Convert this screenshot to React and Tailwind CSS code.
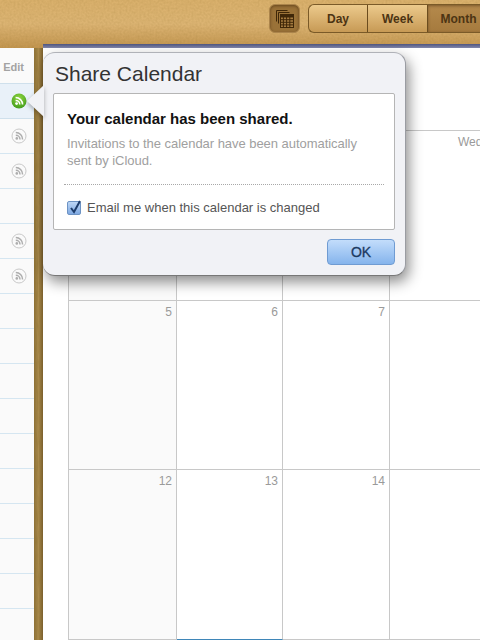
function WoodGrain({ id, freq, opacity }) {
  return (
    <svg className="absolute inset-0 w-full h-full pointer-events-none" style={{ opacity }}>
      <filter id={id}>
        <feTurbulence type="fractalNoise" baseFrequency={freq} numOctaves="3" seed="4" />
        <feColorMatrix values="0 0 0 0 0.25  0 0 0 0 0.15  0 0 0 0 0.02  0 0 0 1.4 -0.45" />
      </filter>
      <rect width="100%" height="100%" filter={`url(#${id})`} />
    </svg>
  )
}

function FeedIcon({ active }) {
  if (active) {
    return (
      <svg width="16" height="16" viewBox="0 0 16 16">
        <defs>
          <radialGradient id="feedGreen" cx="50%" cy="30%" r="75%">
            <stop offset="0%" stopColor="#8fd63f" />
            <stop offset="100%" stopColor="#3f9a1c" />
          </radialGradient>
        </defs>
        <circle cx="8" cy="8" r="7.5" fill="url(#feedGreen)" />
        <circle cx="5.6" cy="10.6" r="1.4" fill="#fff" />
        <path d="M4.6 7.4a4.2 4.2 0 0 1 4.2 4.2M4.6 4.6a7 7 0 0 1 7 7" fill="none" stroke="#fff" strokeWidth="1.5" />
      </svg>
    )
  }
  return (
    <svg width="16" height="16" viewBox="0 0 16 16">
      <circle cx="8" cy="8" r="7" fill="#fafafa" stroke="#c9c9c9" strokeWidth="1" />
      <circle cx="5.8" cy="10.4" r="1.3" fill="#adadad" />
      <path d="M4.8 7.2a4.2 4.2 0 0 1 4.2 4.2M4.8 4.6a6.8 6.8 0 0 1 6.8 6.8" fill="none" stroke="#adadad" strokeWidth="1.5" />
    </svg>
  )
}

function CalIcon() {
  return (
    <svg width="18" height="18" viewBox="0 0 18 18" fill="none" stroke="#3f2708" strokeWidth="1">
      <path d="M0.5 11.5V0.5h11" />
      <path d="M2.5 13.5V2.5h11" />
      <rect x="4.5" y="4.5" width="13" height="13" fill="#a67c40" />
      <path d="M4.5 9.7h13M4.5 12.3h13M4.5 14.9h13M7.4 7v10.5M10.6 7v10.5M13.8 7v10.5" />
      <rect x="4.5" y="4.5" width="13" height="2.5" fill="#3f2708" />
    </svg>
  )
}

const sideRows = [true, true, false, true, true, false, false, false, false, false, false, false, false, false, false]

function Sidebar() {
  return (
    <div className="w-[34px] shrink-0 bg-[#fafafa]">
      <div className="h-[36px] flex items-center justify-end pr-[10px] pt-[4px] border-b border-[#cfe0ec] text-[11px] font-bold text-[#a3a3a3]">
        Edit
      </div>
      <div className="h-[35px] flex items-center justify-end pr-[7px] border-b border-[#cfe0ec] bg-[#e9f1f9]">
        <FeedIcon active />
      </div>
      {sideRows.map((on, i) => (
        <div key={i} className="h-[35px] flex items-center justify-end pr-[7px] border-b border-[#d5e6f1]">
          {on && <FeedIcon />}
        </div>
      ))}
    </div>
  )
}

function DayCell({ day, className }) {
  return (
    <div className={"border-r border-b border-[#c8c8c8] pt-[2px] pr-[4px] text-right text-[12px] text-[#9a9a9a] " + className}>
      {day}
    </div>
  )
}

function Calendar() {
  return (
    <div className="flex-1 min-w-0 bg-white pl-[25px] overflow-hidden">
      <div className="h-[83px] border-b border-[#c8c8c8] w-[500px]" />
      <div className="grid grid-cols-[108px_106px_107px_110px] grid-rows-[170px_169px_170px] w-[432px] border-l border-[#c8c8c8]">
        <DayCell className="bg-[#fafafa]" />
        <DayCell />
        <DayCell />
        <DayCell day="Wed" className="border-r-0 !text-left pl-[68px]" />
        <DayCell day="5" className="bg-[#fafafa]" />
        <DayCell day="6" />
        <DayCell day="7" />
        <DayCell className="border-r-0" />
        <DayCell day="12" className="bg-[#fafafa]" />
        <DayCell day="13" className="border-b-[#3f86b8]" />
        <DayCell day="14" />
        <DayCell className="border-r-0" />
      </div>
    </div>
  )
}

function SharePopover() {
  return (
    <div className="absolute left-[43px] top-[52px] w-[363px] h-[224px] rounded-[12px] bg-[#f1f2f6] border-t border-r border-b border-t-[#b0b2b8] border-r-[#9a9ca2] border-b-[#777] shadow-[3px_6px_14px_rgba(0,0,0,0.45)] px-[10px] pt-[8px]">
      <div className="absolute left-[-16px] top-[32px] drop-shadow-[0_2px_2px_rgba(0,0,0,0.3)]">
        <div className="w-[17px] h-[32px] bg-[#f1f2f6] [clip-path:polygon(100%_0,0_50%,100%_100%)]" />
      </div>
      <h1 className="text-[21px] leading-[26px] text-[#333] font-normal pl-[2px]">Share Calendar</h1>
      <div className="relative mt-[6px] w-[342px] h-[137px] bg-white border border-[#b5b5b5] rounded-[2px] px-[10px]">
        <div className="pt-[15px] pl-[3px] text-[15px] leading-[19px] font-bold text-[#111]">Your calendar has been shared.</div>
        <div className="pt-[7px] pl-[3px] text-[13px] leading-[17px] tracking-[-0.04px] text-[#a0a0a0] w-[310px]">
          Invitations to the calendar have been automatically sent by iCloud.
        </div>
        <div className="mt-[15px] border-t border-dotted border-[#a8a8a8]" />
        <label className="flex items-center gap-[6px] mt-[15px] pl-[3px] text-[13px] leading-[16px] text-[#555]">
          <span className="w-[14px] h-[14px] rounded-[2px] border border-[#6d93c4] bg-gradient-to-b from-[#bcd6f5] to-[#7fa9e2] relative shrink-0">
            <svg className="absolute left-[1px] top-[-3px]" width="14" height="16" viewBox="0 0 14 16">
              <path d="M2 9l3 4 6-11" fill="none" stroke="#1d3c6b" strokeWidth="2" />
            </svg>
          </span>
          Email me when this calendar is changed
        </label>
      </div>
      <div className="flex justify-end mt-[9px] w-[342px]">
        <button className="w-[68px] h-[26px] rounded-[4px] border border-[#6f9bd2] bg-gradient-to-b from-[#c3ddfb] to-[#85b4ec] text-[14px] [-webkit-text-stroke:0.3px_#1c3a62] text-[#1c3a62]">
          OK
        </button>
      </div>
    </div>
  )
}

function TopBar() {
  const seg = "relative h-full flex items-center justify-center text-[12px] font-bold text-[#4c3413] border-r border-[#6b4c1e] shrink-0"
  return (
    <div className="relative h-[48px] shrink-0 bg-gradient-to-b from-[#d9b06c] via-[#dcb473] to-[#c2954f] overflow-hidden">
      <WoodGrain id="leather" freq="0.5" opacity={0.2} />
      <div className="relative flex items-start justify-end gap-[8px] pt-[4px] mr-[-18px]">
        <div className="w-[31px] h-[29px] rounded-[6px] bg-[#9a7238] border border-[#ab844b] shadow-[inset_0_1px_3px_rgba(50,25,0,0.5)] flex items-center justify-center">
          <CalIcon />
        </div>
        <div className="flex w-[190px] h-[29px] rounded-l-[6px] border border-[#7a5a28] border-r-0 bg-gradient-to-b from-[#ecca8c] to-[#c79a55] overflow-hidden shrink-0">
          <div className={seg + " w-[59px]"}>Day</div>
          <div className={seg + " w-[60px]"}>Week</div>
          <div className={seg + " w-[62px] bg-gradient-to-b from-[#b58a4c] to-[#a57a3e] shadow-[inset_0_1px_3px_rgba(50,25,0,0.45)]"}>Month</div>
        </div>
      </div>
      <div className="absolute left-[43px] right-0 bottom-0 h-[4px] bg-gradient-to-b from-[#4f5580] to-[#8488aa]" />
    </div>
  )
}

export default function App() {
  return (
    <div className="relative w-[480px] h-[640px] overflow-hidden flex flex-col bg-white font-['Liberation_Sans',Arial,sans-serif]">
      <TopBar />
      <div className="flex flex-1 min-h-0">
        <Sidebar />
        <div className="relative w-[9px] shrink-0 bg-gradient-to-r from-[#8e7238] via-[#a98a4c] to-[#7a5f2d] overflow-hidden">
          <WoodGrain id="strip" freq="0.9 0.08" opacity={0.4} />
        </div>
        <Calendar />
      </div>
      <SharePopover />
    </div>
  )
}
